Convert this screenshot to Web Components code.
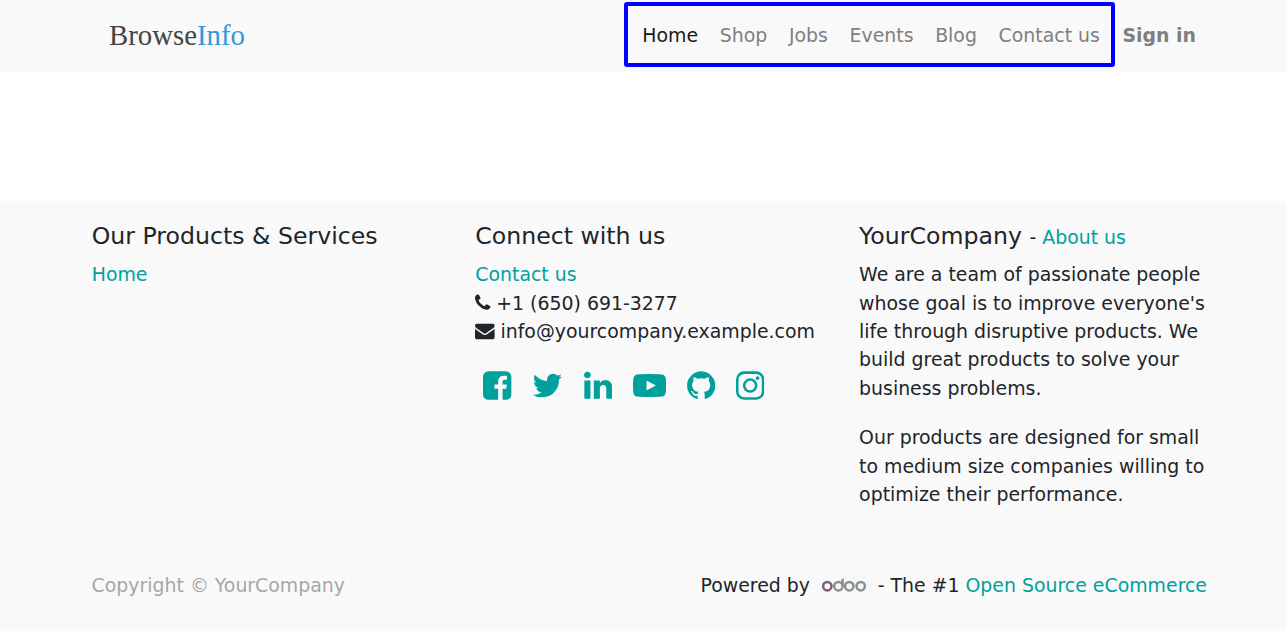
<!DOCTYPE html>
<html lang="en">
<head>
<meta charset="utf-8">
<title>Home | BrowseInfo</title>
<style>
html,body{margin:0;padding:0;background:#fff}
body{font-family:"DejaVu Sans",sans-serif;font-size:18.9px;line-height:28.35px;color:#212529;overflow:hidden}
</style>
</head>
<body>
<site-page></site-page>
<script>
const define = (name, html) => customElements.define(name, class extends HTMLElement {
  constructor() {
    super();
    const t = document.createElement('template');
    t.innerHTML = html;
    this.attachShadow({mode: 'open'}).appendChild(t.content.cloneNode(true));
  }
});

// Glyphs on a 1792-unit em square: [viewBox x, viewBox width, markup]
const GLYPHS = {
  phone: [192, 1408, '<path d="M1600 1240q0 27-10 70.5t-21 68.5q-21 50-122 106-94 51-186 51-27 0-53-3.5t-57.5-12.5-47-14.5-55.5-20.5-49-18q-98-35-175-83-127-79-264-216t-216-264q-48-77-83-175-3-9-18-49t-20.5-55.5-14.5-47-12.5-57.5-3.5-53q0-92 51-186 56-101 106-122 25-11 68.5-21t70.5-10q14 0 21 3 18 6 53 76 11 19 30 54t35 63.5 31 53.5q3 4 17.5 25t21.5 35.5 7 28.5q0 20-28.5 50t-62 55-62 53-28.5 46q0 9 5 22.5t8.5 20.5 14 24 11.5 19q76 137 174 235t235 174q2 1 19 11.5t24 14 20.5 8.5 22.5 5q18 0 46-28.5t53-62 55-62 50-28.5q14 0 28.5 7t35.5 21.5 25 17.5q25 15 53.5 31t63.5 35 54 30q70 35 76 53 3 7 3 21z"/>'],
  envelope: [0, 1792, '<path d="M1792 710v794q0 66-47 113t-113 47h-1472q-66 0-113-47t-47-113v-794q44 49 101 87 362 246 497 345 57 42 92.5 65.5t94.5 48 110 24.5h2q51 0 110-24.5t94.5-48 92.5-65.5q170-123 498-345 57-39 100-87zm0-294q0 79-49 151t-122 123q-376 261-468 325-10 7-42.5 31t-54 38.5-52 32.5-57.5 27-50 9h-2q-23 0-50-9t-57.5-27-52-32.5-54-38.5-42.5-31q-91-64-262-182.5t-205-142.5q-62-42-117-115.5t-55-136.5q0-78 41.5-130t118.5-52h1472q65 0 112.5 47t47.5 113z"/>'],
  facebook: [128, 1536, '<path d="M1376 128q119 0 203.5 84.5t84.5 203.5v960q0 119-84.5 203.5t-203.5 84.5h-188v-595h199l30-232h-229v-148q0-56 23.5-84t91.5-28l122-1v-207q-63-9-178-9-136 0-217.5 80t-81.5 226v171h-200v232h200v595h-532q-119 0-203.5-84.5t-84.5-203.5v-960q0-119 84.5-203.5t203.5-84.5h960z"/>'],
  twitter: [64, 1664, '<path d="M1684 408q-67 98-162 167 1 14 1 42 0 130-38 259.5t-115.5 248.5-184.5 210.5-258 146-323 54.5q-271 0-496-145 35 4 78 4 225 0 401-138-105-2-188-64.5t-114-159.5q33 5 61 5 43 0 85-11-112-23-185.5-111.5t-73.5-205.5v-4q68 38 146 41-66-44-105-115t-39-154q0-88 44-163 121 149 294.5 238.5t371.5 99.5q-8-38-8-74 0-134 94.5-228.5t228.5-94.5q140 0 236 102 109-21 205-78-37 115-142 178 93-10 186-50z"/>'],
  linkedin: [128, 1536, '<path d="M477 625v991h-330v-991h330zm21-306q1 73-50.5 122t-135.5 49h-2q-82 0-132-49t-50-122q0-74 51.5-122.5t134.5-48.5 133 48.5 51 122.5zm1166 729v568h-329v-530q0-105-40.5-164.5t-126.5-59.5q-63 0-105.5 34.5t-63.5 85.5q-11 30-11 81v553h-329q2-399 2-647t-1-296l-1-48h329v144h-2q20-32 41-56t56.5-52 87-43.5 114.5-15.5q171 0 275 113.5t104 332.5z"/>'],
  youtube: [0, 1792, '<path fill-rule="evenodd" d="M1195 865L775 655q-44-20-44 26v430q0 46 44 26l420-210q40-31 0-62zM1792 896q0 96-1 150t-8.5 136.5-22.5 147.5q-16 73-69 113t-124 48q-222 25-671 25t-671-25q-71-8-124.5-48t-69.5-113q-14-65-21.5-147.5t-8.5-136.5-1-150 1-150 8.5-136.5 22.5-147.5q16-73 69-113t124-48q222-25 671-25t671 25q71 8 124.5 48t69.5 113q14 65 21.5 147.5t8.5 136.5 1 150z"/>'],
  github: [128, 1536, '<path d="M896 128q209 0 385.5 103t279.5 279.5 103 385.5q0 251-146.5 451.5t-378.5 277.5q-27 5-40-7t-13-30q0-3 .5-76.5t.5-134.5q0-97-52-142 57-6 102.5-18t94-39 81-66.5 53-105 20.5-150.5q0-119-79-206 37-91-8-204-28-9-81 11t-92 44l-38 24q-93-26-192-26t-192 26q-16-11-42.5-27t-83.5-38.5-85-13.5q-45 113-8 204-79 87-79 206 0 85 20.5 150t52.5 105 80.5 67 94 39 102.5 18q-39 36-49 103-21 10-45 15t-57 5-65.5-21.5-55.5-62.5q-19-32-48.5-52t-49.5-24l-20-3q-21 0-29 4.5t-5 11.5 9 14 13 12l7 5q22 10 43.5 38t31.5 51l10 23q13 38 44 61.5t67 30 69.5 7 55.5-3.5l23-4q0 38 .5 88.5t.5 54.5q0 18-13 30t-40 7q-232-77-378.5-277.5t-146.5-451.5q0-209 103-385.5t279.5-279.5 385.5-103z"/>'],
  instagram: [128, 1536, '<rect x="197" y="197" width="1398" height="1398" rx="370" fill="none" stroke="currentColor" stroke-width="138"/><circle cx="896" cy="896" r="325" fill="none" stroke="currentColor" stroke-width="138"/><circle cx="1295" cy="495" r="98"/>']
};

customElements.define('fa-icon', class extends HTMLElement {
  constructor() {
    super();
    const [x, w, body] = GLYPHS[this.getAttribute('name')];
    this.attachShadow({mode: 'open'}).innerHTML = `
      <style>:host{display:inline-block;line-height:0}svg{display:block;height:1em;width:${w / 1792}em;fill:currentColor}</style>
      <svg viewBox="${x} 0 ${w} 1792" aria-hidden="true">${body}</svg>`;
  }
});

define('text-link', `
<style>:host{display:inline;color:#00a09d}a{color:inherit;text-decoration:none}</style>
<a href="#"><slot></slot></a>`);

define('nav-item', `
<style>:host{display:block;color:#7f7f7f}:host([active]){color:#191919}a{color:inherit;text-decoration:none}</style>
<a href="#"><slot></slot></a>`);

define('brand-logo', `
<style>:host{display:block;font:28.8px/34px "Liberation Serif",serif;color:#444}span{color:#3498db}</style>
Browse<span>Info</span>`);

define('site-header', `
<style>
:host{display:block;height:72px;background:#f9f9f9}
header{display:flex;align-items:flex-start;height:72px;padding:2px 91px 0 109px;box-sizing:border-box}
brand-logo{margin-top:16px}
nav{display:flex;gap:21.65px;margin-left:auto;height:65px;width:491px;box-sizing:border-box;border:4px solid #00f;border-radius:3px;padding:15px 0 0 14.8px;white-space:nowrap}
.sign{font-weight:bold;margin:19px 0 0 7.9px}
</style>
<header>
<brand-logo></brand-logo>
<nav><nav-item active>Home</nav-item><nav-item>Shop</nav-item><nav-item>Jobs</nav-item><nav-item>Events</nav-item><nav-item>Blog</nav-item><nav-item>Contact us</nav-item></nav>
<nav-item class="sign">Sign in</nav-item>
</header>`);

define('footer-column', `
<style>
:host{display:block}
h5{margin:0 0 9.5px;font-size:23.63px;line-height:28.4px;font-weight:400}
</style>
<h5><slot name="title"></slot></h5><slot></slot>`);

define('social-links', `
<style>:host{display:flex;gap:20.8px;font-size:33.1px;color:#00a09d}</style>
<fa-icon name="facebook"></fa-icon><fa-icon name="twitter"></fa-icon><fa-icon name="linkedin"></fa-icon><fa-icon name="youtube"></fa-icon><fa-icon name="github"></fa-icon><fa-icon name="instagram"></fa-icon>`);

define('odoo-logo', `
<style>:host{display:block;width:56px;height:24px;background:#f6f9fa}svg{display:block}</style>
<svg width="56" height="24" viewBox="0 0 56 24" fill="none" stroke="#8f8f8f" stroke-width="2.5" role="img">
<circle cx="11.3" cy="12.2" r="4.2" stroke="#875a7b"/><circle cx="22.4" cy="12.2" r="4.2"/><path d="M26.6 12.2V4.8"/><circle cx="33.3" cy="12.2" r="4.2"/><circle cx="44.7" cy="12.2" r="4.2"/>
</svg>`);

define('site-footer', `
<style>
:host{display:block;background:#f9f9f9;height:430px;white-space:nowrap}
.cols{display:grid;grid-template-columns:383.6px 383.8px 1fr;padding:20.5px 75px 0 91.7px;height:350px;box-sizing:border-box}
small{font-size:18.9px}
.links{padding-top:.85px}
.row{display:flex;align-items:center}
.row fa-icon{font-size:19.6px;margin-right:5.6px}
social-links{margin:24.1px 0 0 7.9px}
p{margin:0 0 21.25px}
.bottom{display:flex;justify-content:space-between;padding:20px 80px 0 91.6px}
.copy{color:#a6a7a8}
.powered{display:flex;align-items:center}
odoo-logo{margin:2px 6px 0 5.7px}
</style>
<footer>
<div class="cols">
<footer-column><span slot="title">Our Products &amp; Services</span><div class="links"><text-link>Home</text-link></div></footer-column>
<footer-column><span slot="title">Connect with us</span>
<div class="links"><text-link>Contact us</text-link></div>
<div class="row"><fa-icon name="phone"></fa-icon><span>+1 (650) 691-3277</span></div>
<div class="row"><fa-icon name="envelope"></fa-icon><span>info@yourcompany.example.com</span></div>
<social-links></social-links>
</footer-column>
<footer-column><span slot="title">YourCompany <small>- <text-link>About us</text-link></small></span>
<p>We are a team of passionate people<br>whose goal is to improve everyone's<br>life through disruptive products. We<br>build great products to solve your<br>business problems.</p>
<p>Our products are designed for small<br>to medium size companies willing to<br>optimize their performance.</p>
</footer-column>
</div>
<div class="bottom"><span class="copy">Copyright © YourCompany</span>
<div class="powered"><span>Powered by</span><odoo-logo></odoo-logo><span>- The #1 <text-link>Open Source eCommerce</text-link></span></div></div>
</footer>`);

define('site-page', `
<style>:host{display:block}main{height:129px;background:#fff}</style>
<site-header></site-header><main></main><site-footer></site-footer>`);
</script>
</body>
</html>
